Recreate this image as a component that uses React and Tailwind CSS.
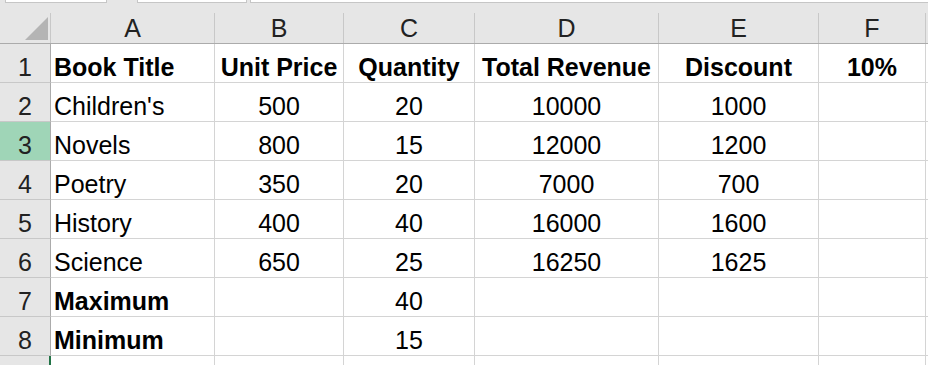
const cols = [
  { key: "A", w: "w-[164px]", align: "justify-start pl-[3px]" },
  { key: "B", w: "w-[129px]", align: "justify-center" },
  { key: "C", w: "w-[131px]", align: "justify-center" },
  { key: "D", w: "w-[184px]", align: "justify-center" },
  { key: "E", w: "w-[160px]", align: "justify-center" },
  { key: "F", w: "w-[107px]", align: "justify-center" },
];

const rows = [
  { n: 1, bold: true, cells: ["Book Title", "Unit Price", "Quantity", "Total Revenue", "Discount", "10%"] },
  { n: 2, cells: ["Children's", "500", "20", "10000", "1000", ""] },
  { n: 3, selected: true, cells: ["Novels", "800", "15", "12000", "1200", ""] },
  { n: 4, cells: ["Poetry", "350", "20", "7000", "700", ""] },
  { n: 5, cells: ["History", "400", "40", "16000", "1600", ""] },
  { n: 6, cells: ["Science", "650", "25", "16250", "1625", ""] },
  { n: 7, boldFirst: true, cells: ["Maximum", "", "40", "", "", ""] },
  { n: 8, boldFirst: true, cells: ["Minimum", "", "15", "", "", ""] },
  { n: 9, last: true, cells: ["", "", "", "", "", ""] },
];

const App = () => {
  return (
    <div
      className="w-[928px] h-[365px] overflow-hidden bg-white text-[25px] leading-[24px] text-black"
      style={{ fontFamily: '"Liberation Sans", Arial, sans-serif' }}
    >
      {/* sheet tab strip remnants */}
      <div className="flex h-[3px] bg-[#e6e6e6]">
        <div className="ml-[5px] w-[102px] bg-white border-x border-b border-[#c6c6c6]" />
        <div className="ml-[30px] w-[110px] bg-white border-x border-b border-[#c6c6c6]" />
        <div className="ml-[3px] flex-1 bg-white border-l border-b border-[#c6c6c6]" />
      </div>

      {/* column headers */}
      <div className="flex h-[41px] bg-[#e6e6e6] border-b border-[#ababab]">
        <div className="w-[51px] flex flex-col">
          <div className="h-[10px]" />
          <div className="flex-1 border-r border-[#c8c8c8] flex items-start justify-end pr-[2px] pt-[4px]">
            <svg width="23" height="23" viewBox="0 0 23 23">
              <polygon points="23,0 23,23 0,23" fill="#b4b4b4" />
            </svg>
          </div>
        </div>
        {cols.map((c) => (
          <div key={c.key} className={`${c.w} flex flex-col`}>
            <div className="h-[10px]" />
            <div className="flex-1 border-r border-[#c8c8c8] flex items-end justify-center pb-[3px] text-[#222]">
              {c.key}
            </div>
          </div>
        ))}
        <div className="flex-1" />
      </div>

      {/* rows */}
      {rows.map((r) => (
        <div key={r.n} className="flex h-[39px]">
          <div
            className={`w-[51px] flex items-end justify-center pb-[3px] border-b border-r ${
              r.selected ? "bg-[#9fd5b7]" : "bg-[#e6e6e6]"
            } ${r.last ? "border-r-2 border-r-[#217346] border-b-[#c8c8c8]" : "border-b-[#c8c8c8] border-r-[#ababab]"} text-[#222]`}
          >
            {r.last ? "" : r.n}
          </div>
          {cols.map((c, i) => (
            <div
              key={c.key}
              className={`${c.w} flex items-end pb-[3px] border-b border-r border-[#d4d4d4] whitespace-nowrap ${c.align} ${
                r.bold || (r.boldFirst && i === 0) ? "font-bold" : ""
              }`}
            >
              {r.cells[i]}
            </div>
          ))}
          <div className="flex-1 border-b border-[#d4d4d4]" />
        </div>
      ))}
    </div>
  );
};

export default App;
